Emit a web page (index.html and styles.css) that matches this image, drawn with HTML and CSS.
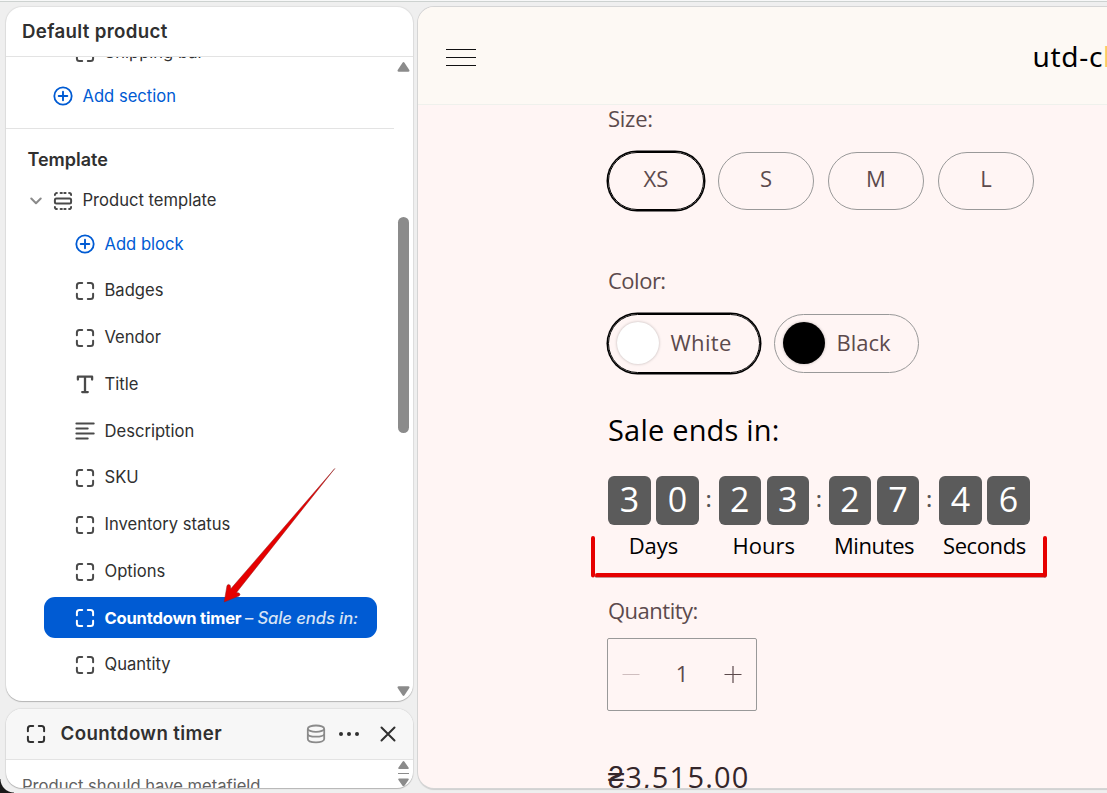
FILE: index.html
```html
<!DOCTYPE html>
<html lang="en">
<head>
<meta charset="utf-8">
<title>Default product</title>
<link rel="stylesheet" href="styles.css">
</head>
<body>
<svg class="defs" width="0" height="0">
  <symbol id="block" viewBox="0 0 20 20"><path d="M1.900 7.200V4.400a2.500 2.500 0 0 1 2.500-2.500h2.800M12.800 1.900h2.800a2.500 2.500 0 0 1 2.500 2.500v2.800M18.100 12.800v2.800a2.500 2.500 0 0 1-2.500 2.500h-2.800M7.200 18.100H4.400a2.500 2.500 0 0 1-2.500-2.500v-2.800" fill="none" stroke="currentColor" stroke-width="2" stroke-linecap="round"/></symbol>
  <symbol id="add" viewBox="0 0 20 20"><path d="M10 5.700v8.600M5.700 10h8.600" fill="none" stroke="currentColor" stroke-width="1.900" stroke-linecap="round"/><circle cx="10" cy="10" r="8.700" fill="none" stroke="currentColor" stroke-width="1.800"/></symbol>
</svg>
<div class="topbar"></div>
<div class="corner"></div>
<main class="editor">
  <aside class="sidebar">
    <section class="panel tree">
      <h1 class="tree-title">Default product</h1>
      <div class="tree-body">
        <div class="row shipping"><svg class="icon"><use href="#block"/></svg><span>Shipping bar</span></div>
        <div class="row add add-section"><svg class="icon"><use href="#add"/></svg><span>Add section</span></div>
        <div class="divider"></div>
        <h2 class="group">Template</h2>
        <div class="row section">
          <svg class="chevron" viewBox="0 0 12 8"><path d="M1.300 1.500 6 6.200l4.700-4.700" fill="none" stroke="currentColor" stroke-width="2" stroke-linecap="round" stroke-linejoin="round"/></svg>
          <svg class="icon" viewBox="0 0 20 20"><g fill="none" stroke="currentColor" stroke-width="2" stroke-linecap="round"><rect x="1.900" y="7.400" width="16.200" height="5.200" rx="1.500"/><path d="M1.900 4a2 2 0 0 1 2-2M7.600 1.900h1.300M11.300 1.900h1.300M16.100 1.900a2 2 0 0 1 2 2M1.900 16a2 2 0 0 0 2 2.100M7.600 18.100h1.300M11.300 18.100h1.300M18.100 16a2 2 0 0 1-2 2.100"/></g></svg>
          <span>Product template</span>
        </div>
        <div class="row add"><svg class="icon"><use href="#add"/></svg><span>Add block</span></div>
        <div class="row"><svg class="icon"><use href="#block"/></svg><span>Badges</span></div>
        <div class="row"><svg class="icon"><use href="#block"/></svg><span>Vendor</span></div>
        <div class="row"><svg class="icon" viewBox="0 0 20 20"><path d="M2.900 4.500V1.700h14.200v2.800M10 1.700v15.400M7.200 17.100h5.600" fill="none" stroke="currentColor" stroke-width="2.300" stroke-linecap="round" stroke-linejoin="round"/></svg><span>Title</span></div>
        <div class="row"><svg class="icon" viewBox="0 0 20 20"><path d="M1.300 2.500h17.500M1.300 7.500h11.500M1.300 12.500h17.500M1.300 17.500h11.500" stroke="currentColor" stroke-width="1.800" stroke-linecap="round"/></svg><span>Description</span></div>
        <div class="row"><svg class="icon"><use href="#block"/></svg><span>SKU</span></div>
        <div class="row"><svg class="icon"><use href="#block"/></svg><span>Inventory status</span></div>
        <div class="row"><svg class="icon"><use href="#block"/></svg><span>Options</span></div>
        <div class="row selected"><svg class="icon"><use href="#block"/></svg><span class="selected-name">Countdown timer</span><span class="selected-note">– <i>Sale ends in:</i></span></div>
        <div class="row"><svg class="icon"><use href="#block"/></svg><span>Quantity</span></div>
      </div>
      <div class="scrollbar">
        <svg class="scroll-arrow" viewBox="0 0 12 10"><path d="M5 .7a1.300 1.300 0 0 1 2 0l4.800 7.200q.7 1.800-1.200 1.800H1.400Q-.5 9.700.2 7.900z" fill="#8b8b8b"/></svg>
        <div class="scroll-thumb"></div>
        <svg class="scroll-arrow down" viewBox="0 0 12 10"><path d="M5 .7a1.300 1.300 0 0 1 2 0l4.800 7.200q.7 1.800-1.200 1.800H1.400Q-.5 9.700.2 7.900z" fill="#8b8b8b"/></svg>
      </div>
    </section>
    <section class="panel settings">
      <header class="settings-head">
        <svg class="icon"><use href="#block"/></svg>
        <h2 class="settings-title">Countdown timer</h2>
        <svg class="icon source" viewBox="0 0 20 20"><g fill="none" stroke="currentColor" stroke-width="1.800"><ellipse cx="10" cy="4.700" rx="8.200" ry="3.200"/><path d="M1.800 4.700v10.300c0 2 3.700 3.300 8.200 3.300s8.200-1.300 8.200-3.300V4.700M1.800 9.700c0 1.800 3.700 3 8.200 3s8.200-1.200 8.200-3"/></g></svg>
        <svg class="icon more" viewBox="0 0 20 20"><g fill="currentColor"><circle cx="2" cy="10" r="2"/><circle cx="10" cy="10" r="2"/><circle cx="18" cy="10" r="2"/></g></svg>
        <svg class="icon close" viewBox="0 0 20 20"><path d="M3.500 3.500l13 13M16.500 3.500l-13 13" stroke="currentColor" stroke-width="2" stroke-linecap="round"/></svg>
      </header>
      <div class="settings-body">
        <p class="hint">Product should have metafield</p>
        <svg class="mini-scroll" viewBox="0 0 11 26"><g fill="#8b8b8b"><path d="M4.500.8a1.200 1.200 0 0 1 2 0l4.200 6Q11 8 10 8H1Q0 8 .3 6.800zM0 12h11v1H0zM4.500 24.800a1.200 1.200 0 0 0 2 0l4.200-6Q11 17.600 10 17.600H1q-1 0-.7 1.200z"/></g></svg>
      </div>
    </section>
  </aside>
  <section class="preview">
    <header class="store-head">
      <svg class="menu" viewBox="0 0 30 18"><path d="M0 .5h30M0 8.500h30M0 16.500h30" stroke="#111"/></svg>
      <div class="store-name">utd-c<span class="cut">l</span></div>
    </header>
    <div class="product">
      <p class="label size-label">Size:</p>
      <div class="sizes">
        <button class="pill active">XS</button><button class="pill">S</button><button class="pill">M</button><button class="pill">L</button>
      </div>
      <p class="label color-label">Color:</p>
      <div class="colors">
        <button class="swatch active"><i class="dot white"></i><span>White</span></button>
        <button class="swatch"><i class="dot black"></i><span class="black-name">Black</span></button>
      </div>
      <p class="sale">Sale ends in:</p>
      <div class="timer">
        <div class="unit"><div class="digits"><b>3</b><b>0</b></div><span>Days</span></div><em>:</em>
        <div class="unit"><div class="digits"><b>2</b><b>3</b></div><span>Hours</span></div><em>:</em>
        <div class="unit"><div class="digits"><b>2</b><b>7</b></div><span class="long">Minutes</span></div><em>:</em>
        <div class="unit"><div class="digits"><b>4</b><b>6</b></div><span class="long">Seconds</span></div>
      </div>
      <p class="label quantity-label">Quantity:</p>
      <div class="stepper">
        <svg class="step minus" viewBox="0 0 18 18"><path d="M.5 8.500h17" stroke="currentColor"/></svg>
        <span>1</span>
        <svg class="step" viewBox="0 0 18 18"><path d="M.5 8.500h17M9 0v17" stroke="currentColor" stroke-width="1.200"/></svg>
      </div>
      <p class="price">₴3,515.00</p>
    </div>
  </section>
</main>
<svg class="notes" viewBox="0 0 1107 793">
  <path d="M334.800 468.500 236.500 592.500 239 593Q241 594.500 239 596L224.200 602 227 585.500Q228.500 583.300 230.300 585.500L230.800 588.800Z" fill="#e60000" stroke="#8e2020" stroke-width=".5"/>
  <path d="M593 538v37.500M1045 538v37.500" stroke="#e60000" stroke-width="4" stroke-linecap="round"/>
  <path d="M596 576.500h449" stroke="#8e3030" stroke-width="2" stroke-linecap="round"/>
  <path d="M597 575h447" stroke="#e60000" stroke-width="4" stroke-linecap="round"/>
</svg>
</body>
</html>
```
FILE: styles.css
```css
* { box-sizing: border-box; }
body { margin: 0; width: 1107px; height: 793px; overflow: hidden; position: relative; background: #efefef; font-family: Inter, sans-serif; color: #303030; }
h1, h2, p { margin: 0; }
button { font: inherit; color: inherit; background: none; padding: 0; border: 0; letter-spacing: inherit; }
.defs, .notes, .corner { position: absolute; }
.notes { left: 0; top: 0; width: 1107px; height: 793px; pointer-events: none; }
.corner { left: 0; bottom: 0; width: 14px; height: 14px; background: radial-gradient(circle at 14px 0, #efefef 13px, #1a1a1a 14px); }
.topbar { height: 2px; background: #f7f8f8; border-bottom: 1px solid #cdd2d0; }
.editor { position: relative; display: flex; gap: 5px; padding: 5px 0 0 6px; height: 791px; }
.sidebar { width: 407px; flex: none; display: flex; flex-direction: column; gap: 8px; }
.panel { background: #fff; border-radius: 16px; overflow: hidden; box-shadow: 0 1px 1px #0003, 0 0 1px 1px #0000000f; }
.tree { height: 694px; display: grid; grid-template: 50px 1fr / 1fr 19px; }
.tree-title { grid-column: 1 / 3; border-bottom: 1px solid #e3e3e3; padding-left: 16px; font-size: 18.700px; font-weight: 600; line-height: 50px; letter-spacing: .32px; }
.tree-body { overflow: hidden; font-size: 16.600px; }
.row { height: 46.750px; padding-left: 69px; display: flex; align-items: center; gap: 9.500px; white-space: nowrap; }
.row > span { margin-top: -1.300px; }
.icon { width: 20px; height: 20px; flex: none; color: #4a4a4a; }
.row.shipping { height: 40px; margin-top: -24px; }
.row.shipping > span { margin-top: -2px; }
.row.add, .row.add .icon { color: #005bd3; }
.row.add > span { margin-top: -.5px; }
.row.add-section { height: 46px; padding-left: 47px; }
.row.add-section > span { margin-top: 0; }
.divider { height: 1px; background: #e3e3e3; margin: 9px 0 10px; }
.group { padding-left: 21.500px; font-size: 18px; line-height: 41px; font-weight: 600; }
.row.section { height: 41px; padding-left: 24px; }
.row.section > span { margin-top: -1px; margin-left: .5px; }
.chevron { width: 12px; height: 8px; margin-right: 1px; color: #8a8a8a; }
.row.selected { height: 41px; margin: 2px 0 3.500px 38px; width: 333px; padding-left: 31px; background: #005bd3; color: #fff; border-radius: 11px; }
.row.selected > span { margin-top: 0; }
.row.selected .icon { color: #fff; }
.row.selected .selected-name { font-weight: 700; font-size: 16.600px; letter-spacing: -.22px; }
.row.selected .selected-note { color: #d7e3f5; font-weight: 500; margin-left: -6px; letter-spacing: -.08px; }
.scrollbar { display: flex; flex-direction: column; align-items: center; padding: 5px 0 5px; }
.scroll-arrow { width: 13px; height: 10px; flex: none; }
.scroll-arrow.down { transform: rotate(180deg); margin-top: auto; }
.scroll-thumb { width: 11px; height: 216px; border-radius: 6px; background: #8b8b8b; margin-top: 145px; }
.settings { height: 79px; }
.settings-head { height: 51px; background: #f7f7f7; border-bottom: 1px solid #e3e3e3; display: flex; align-items: center; padding: 0 15px 0 20px; }
.settings-head .icon { color: #303030; }
.settings-title { font-size: 18.700px; font-weight: 600; margin: -2px auto 0 14.500px; letter-spacing: .38px; }
.settings-head .source { color: #8a8a8a; margin-right: 13px; }
.settings-head .more { margin-right: 19px; }
.settings-body { display: flex; justify-content: space-between; padding: 0 4px 0 16px; }
.hint { font-size: 16.600px; color: #616161; line-height: 20px; margin-top: 16px; }
.mini-scroll { width: 11px; height: 26px; margin-top: 1px; flex: none; }

.preview { flex: none; width: 705px; height: 781px; border-radius: 16px; overflow: hidden; background: #fff5f4; box-shadow: 0 0 0 1px #d5d5d5, 0 2px 1px #0002; font-family: "Open Sans", sans-serif; color: #5c4a4c; }
.store-head { height: 98px; background: #fdf9f4; border-bottom: 1px solid #eff1ec; display: flex; align-items: center; padding-left: 28px; }
.menu { width: 30px; height: 18px; margin-top: 4px; }
.store-name { margin-left: 556.500px; margin-top: 1px; font-family: "Noto Sans", sans-serif; font-size: 28px; color: #000; letter-spacing: .7px; }
.cut { color: #ffc965; }
.product { padding-left: 189px; font-size: 22px; }
.label { line-height: 30px; padding-left: 1px; position: relative; top: -2px; letter-spacing: -.25px; }
.sizes { display: flex; gap: 14px; margin: 17px 0 0 1px; }
.pill { width: 96px; height: 58px; border: 1px solid #999; border-radius: 29px; line-height: 51px; padding-bottom: 5px; }
.pill.active, .swatch.active { border-color: #000; box-shadow: 0 0 0 1.500px #000; }
.color-label { margin-top: 57px; letter-spacing: -.5px; }
.colors { display: flex; gap: 14px; margin: 17px 0 0 1px; }
.swatch { width: 152px; height: 59px; border: 1px solid #999; border-radius: 30px; display: flex; align-items: center; gap: 12px; padding-left: 7.500px; }
.swatch + .swatch { width: 145px; }
.swatch span { margin-top: -4px; letter-spacing: .3px; }
.swatch .black-name { letter-spacing: 0; }
.dot { width: 42px; height: 42px; border-radius: 50%; flex: none; margin-top: -1px; box-shadow: 0 0 3px #0004; }
.white { background: #fff; }
.black { background: #000; }
.sale { font-size: 29px; line-height: 38px; color: #000; margin: 38px 0 0; padding-left: 1px; letter-spacing: .2px; }
.timer { display: flex; margin: 27px 0 0 1px; color: #000; }
.unit { width: 91px; display: flex; flex-direction: column; align-items: center; }
.digits { display: flex; gap: 5.500px; }
.digits b { width: 42.500px; height: 49px; border-radius: 6px; background: #5b5b5b; color: #fff; font-weight: 400; font-size: 34px; line-height: 47px; text-align: center; }
.unit span { line-height: 30px; margin: 5px 0 1px; }
.unit .long { letter-spacing: -.4px; }
.timer em { width: 19.300px; height: 49px; line-height: 47px; text-align: center; font-style: normal; color: #555; font-weight: 600; font-size: 21px; }
.quantity-label { margin-top: 36px; letter-spacing: -.5px; }
.stepper { width: 150px; height: 73px; border: 1px solid #999; border-radius: 2px; margin-top: 11px; padding: 0 14px; display: flex; justify-content: space-between; align-items: center; }
.stepper span { margin-top: -3px; }
.step { width: 18px; height: 18px; color: #5c4a4c; }
.minus { color: #cfbebf; }
.price { color: #34262a; font-size: 29px; line-height: 40px; margin-top: 46px; padding-left: 1px; white-space: nowrap; letter-spacing: 1.200px; }
```
